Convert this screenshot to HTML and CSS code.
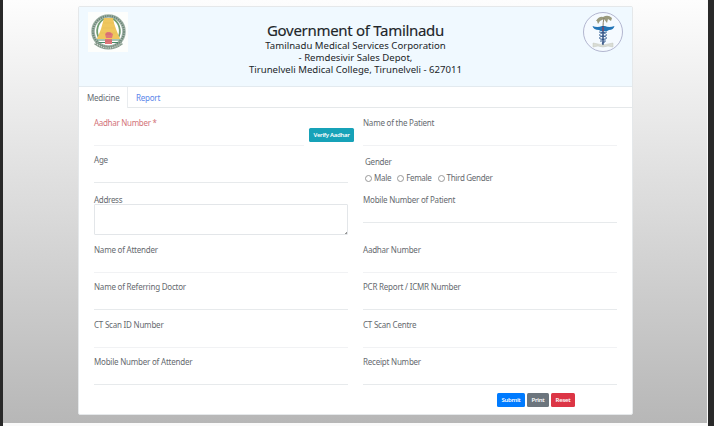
FILE: index.html
```html
<!DOCTYPE html>
<html lang="en">
<head>
<meta charset="utf-8">
<title>Government of Tamilnadu</title>
<link rel="stylesheet" href="styles.css">
</head>
<body>
<div class="page">
<main class="card">
  <header class="header">
    <svg class="seal" viewBox="0 0 40 40">
      <rect width="40" height="40" fill="#fdfefc"/>
      <circle cx="20.5" cy="19.5" r="15.500" fill="#fff" stroke="#a3b4a9" stroke-width="3.600"/>
      <circle cx="20.5" cy="19.5" r="15.500" fill="none" stroke="#6b8677" stroke-width="2" stroke-dasharray="1.3 1"/>
      <path d="M11 26C7 19 10 10 16 7M30 26c4-7 1-16-5-19" fill="none" stroke="#6d9d70" stroke-width="1.800"/>
      <path d="M16 6h9l1 5 2 6 4 10H9l4-10z" fill="#efc75e"/>
      <path d="M15 11h11M14 16h13M12 21h17" stroke="#e6bf55" stroke-width=".6"/>
      <path d="M9 28h23M11 30.500h19" stroke="#4b8968" stroke-width="1.200"/>
      <path d="M17 22l2-2h3l3 2-1 4h-6zM17 27h7v5h-7z" fill="#df7779"/>
      <path d="M18 22h5M17 29h7" stroke="#c9656c" stroke-width=".8"/>
      <path d="M7 31q13.500 10 27 0" fill="none" stroke="#869a8c" stroke-width="3"/>
      <path d="M7 31q13.500 10 27 0" fill="none" stroke="#d9e1da" stroke-width="1.200" stroke-dasharray="1 1.300"/>
    </svg>
    <div class="heading">
      <h1>Government of Tamilnadu</h1>
      <p class="dept">Tamilnadu Medical Services Corporation</p>
      <p class="depot">- Remdesivir Sales Depot,</p>
      <p class="college">Tirunelveli Medical College, Tirunelveli - 627011</p>
    </div>
    <svg class="seal" viewBox="0 0 40 40">
      <circle cx="20" cy="20" r="19.500" fill="#f5faff" stroke="#aaaec9" stroke-width=".9"/>
      <path d="M13 9q3-5 7-4 5-3 9 1l-1 3-3-2-1 4-3-4-4 2-2 3-1-3z" fill="#9a9a7d"/>
      <path d="M21 6q-1 4-1 9" fill="none" stroke="#857e66"/>
      <path d="M9.500 14q5 2 9.500 0h3q4 2 9.500 0-1 4-5.500 4-3 2-5 1-3 1-5-1-5.500 0-6.500-4z" fill="#2275b7"/>
      <path d="M16 20q9 1 7 4-8 0-6 3 6 0 5 3-4 0-2 3M24 20q-9 1-7 4 8 0 6 3-6 0-5 3" fill="none" stroke="#42699a"/>
      <path d="M20 14v19" stroke="#304f80" stroke-width="1.500"/>
      <path d="M20 15v4" stroke="#a7475c"/>
      <path d="M10 31l5 1q5 2 10 0l5-1v4l-5-1q-5 2-10 0l-5 1z" fill="#d2d5ca" fill-opacity=".8" stroke="#c4c8be" stroke-width=".5"/>
    </svg>
  </header>
  <nav class="tabs">
    <a class="tab active">Medicine</a>
    <a class="tab">Report</a>
  </nav>
  <form class="form">
    <div class="field aadhar faint">
      <label class="required">Aadhar Number *</label>
      <button type="button" class="btn verify">Verify Aadhar</button>
    </div>
    <div class="field first faint"><label>Name of the Patient</label></div>
    <div class="field"><label>Age</label></div>
    <div class="gender">
      <span>Gender</span>
      <div class="options">
        <label><i class="radio"></i>Male</label>
        <label><i class="radio"></i>Female</label>
        <label><i class="radio"></i>Third Gender</label>
      </div>
    </div>
    <div class="address"><label>Address</label><div class="textarea"></div></div>
    <div class="field mobile"><label>Mobile Number of Patient</label></div>
    <div class="field faint"><label>Name of Attender</label></div>
    <div class="field faint"><label>Aadhar Number</label></div>
    <div class="field"><label>Name of Referring Doctor</label></div>
    <div class="field"><label>PCR Report / ICMR Number</label></div>
    <div class="field faint"><label>CT Scan ID Number</label></div>
    <div class="field faint"><label>CT Scan Centre</label></div>
    <div class="field"><label>Mobile Number of Attender</label></div>
    <div class="field"><label>Receipt Number</label></div>
  </form>
  <div class="actions">
    <button type="button" class="btn submit">Submit</button>
    <button type="button" class="btn print">Print</button>
    <button type="button" class="btn reset">Reset</button>
  </div>
</main>
</div>
</body>
</html>
```

FILE: styles.css
```css
* { box-sizing: border-box; }
body {
  margin: 0;
  height: 426px;
  overflow: hidden;
  background: #fafafa;
  font-family: "Noto Sans", "Open Sans", sans-serif;
  font-size: 8px;
  line-height: 12px;
  letter-spacing: -0.22px;
  color: #666a6f;
}
.page {
  height: 426px;
  padding: 6px 74px 0 75px;
  border-left: 3px solid #292929;
  border-right: 6px solid #292929;
  background: linear-gradient(#fdfdfd, #b7b7b7) 0 0 / calc(100% - 1px) 423px no-repeat #fafafa;
}
.card {
  width: 555px;
  height: 409px;
  background: #fff;
  border: 1px solid #e5e8ea;
  border-radius: 2px;
}
.header {
  display: flex;
  justify-content: space-between;
  align-items: flex-start;
  height: 80px;
  padding: 5px 9px 0;
  background: #f0f9ff;
  border-bottom: 1px solid #e3eaef;
}
.seal { width: 40px; height: 40px; }
.heading {
  padding-top: 8px;
  text-align: center;
  color: #212529;
  white-space: nowrap;
  letter-spacing: 0;
}
h1, p { margin: 0; font-weight: 400; }
h1 {
  font-size: 15px;
  line-height: 20px;
  letter-spacing: -0.3px;
  -webkit-text-stroke: 0.15px #212529;
}
p { font-size: 9.6px; line-height: 12px; }
.tabs {
  display: flex;
  height: 21px;
  border-bottom: 1px solid #e5e8ea;
}
.tab {
  height: 21px;
  padding: 5px 8px 0;
  color: #5b86ea;
}
.tab.active {
  width: 49px;
  background: #fff;
  border-right: 1px solid #e9ecef;
  color: #666c72;
  letter-spacing: -0.2px;
}
.form {
  display: grid;
  grid-template-columns: 254px 254px;
  column-gap: 15px;
  grid-template-rows: 38px 37px 53px 37px 37px 38px 37px;
  padding: 0 15px;
}
.field {
  display: flex;
  align-items: flex-end;
  border-bottom: 1px solid #e7eaec;
  padding-bottom: 16px;
}
.faint { border-bottom-color: #f1f2f4; }
.aadhar {
  position: relative;
  width: 210px;
}
.first, .field.aadhar { padding-bottom: 16.5px; }
.required { color: #d37479; letter-spacing: -0.3px; }
.btn {
  border: 0;
  border-radius: 1.5px;
  padding: 0;
  height: 14px;
  font: 600 6px/14px "Noto Sans", sans-serif;
  letter-spacing: -0.3px;
  color: #fff;
  text-align: center;
  white-space: nowrap;
}
.verify {
  position: absolute;
  left: 215px;
  top: 20px;
  width: 45px;
  background: #17a2b8;
}
.gender { padding: 10px 0 0 2px; }
.gender span { display: block; }
.options {
  display: flex;
  gap: 6px;
  margin-top: 4px;
}
.options label {
  display: flex;
  align-items: center;
  letter-spacing: -0.3px;
}
.radio {
  width: 7px;
  height: 7px;
  margin-right: 2px;
  border: 1px solid #999;
  border-radius: 50%;
}
.address { padding-top: 11px; }
.address label { display: block; height: 10px; letter-spacing: -0.3px; }
.textarea {
  height: 31px;
  border: 1px solid #e3e6e9;
  border-radius: 1px;
  background: linear-gradient(135deg, transparent 50%, #999 50%) 100% 100% / 2px 2px no-repeat;
}
.mobile { height: 40px; }
.actions {
  display: flex;
  gap: 2px;
  padding: 8px 0 0 418px;
}
.submit { width: 28px; background: #007bff; }
.print { width: 22px; background: #6c757d; }
.reset { width: 24px; background: #dc3545; }
```
